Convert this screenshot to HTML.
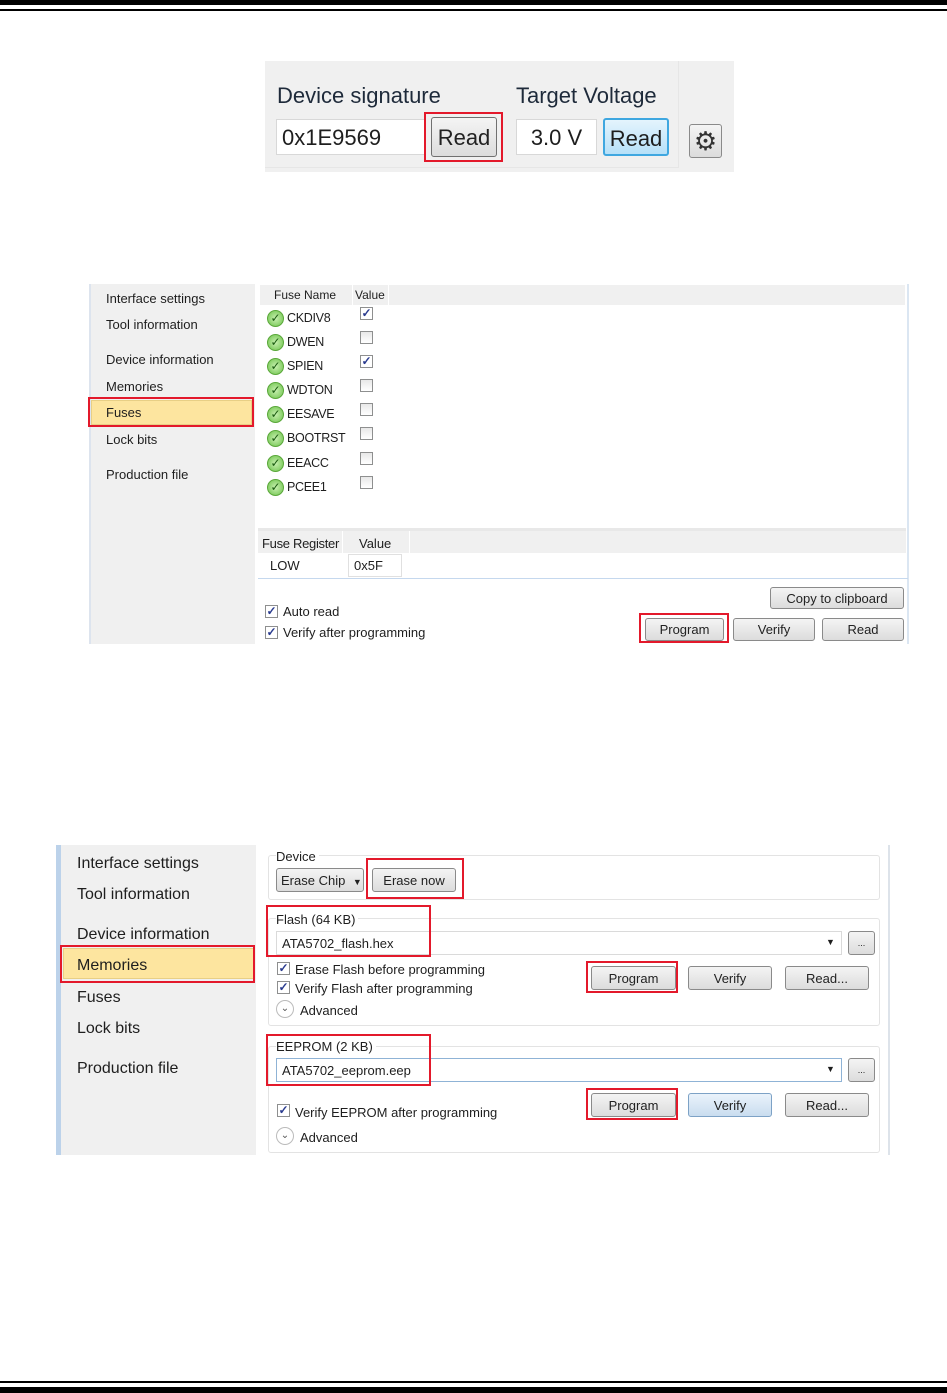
<!DOCTYPE html>
<html><head><style>
*{margin:0;padding:0;box-sizing:border-box}
body{width:947px;height:1393px;background:#fff;position:relative;overflow:hidden;font-family:"Liberation Sans",sans-serif;color:#1e1e1e}
div,span{position:absolute}
.t{white-space:nowrap}
.btn{border:1px solid #8a8a8a;border-radius:3px;background:linear-gradient(#f4f4f4,#dcdcdc);text-align:center;color:#222}
.red{border:2px solid #e3192b}
.cb{width:13px;height:13px;border:1px solid #8e8f8f;background:linear-gradient(#e8e8e8,#fff)}
.cbk{width:13px;height:13px;border:1px solid #8e8f8f;background:#fff;color:#2a3b8f;font-size:12px;line-height:11px;text-align:center;font-weight:bold}
.ok{width:17px;height:17px;border-radius:50%;background:radial-gradient(#c8f0b0,#6cc24a);border:1px solid #5aa83a;color:#1a5a10;font-size:12px;line-height:15px;text-align:center}
.grp{border:1px solid #e3e3e3;border-radius:3px}
.fn{font-size:12.5px;letter-spacing:-0.3px}
</style></head><body>
<div style="left:0;top:0;width:947px;height:5px;background:#000"></div>
<div style="left:0;top:9px;width:947px;height:2px;background:#000"></div>
<div style="left:0;top:1381px;width:947px;height:2px;background:#000"></div>
<div style="left:0;top:1387px;width:947px;height:6px;background:#000"></div>

<!-- Section 1 -->
<div style="left:265px;top:61px;width:469px;height:111px;background:#f0f0f0"></div>
<div style="left:678px;top:61px;width:1px;height:107px;background:#e6e6e6"></div>
<div style="left:265px;top:167px;width:413px;height:1px;background:#e6e6e6"></div>
<div class="t" style="left:277px;top:83px;font-size:22px;color:#1e2a3a">Device signature</div>
<div class="t" style="left:516px;top:83px;font-size:22px;color:#1e2a3a">Target Voltage</div>
<div class="t" style="left:276px;top:119px;width:150px;height:36px;background:#fff;border:1px solid #d8d8d8;font-size:22px;line-height:36px;padding-left:5px">0x1E9569</div>
<div class="btn t" style="left:431px;top:117px;width:66px;height:40px;font-size:22px;line-height:40px;border-color:#707070">Read</div>
<div class="red" style="left:424px;top:112px;width:79px;height:50px"></div>
<div class="t" style="left:516px;top:119px;width:81px;height:36px;background:#fff;border:1px solid #d8d8d8;font-size:22px;line-height:36px;text-align:center">3.0 V</div>
<div class="t" style="left:603px;top:118px;width:66px;height:38px;font-size:22px;line-height:37px;text-align:center;border:2px solid #3fa7e0;border-radius:3px;background:linear-gradient(#e4f4fd,#b6e0f8)">Read</div>
<div class="btn" style="left:689px;top:124px;width:33px;height:34px;font-size:26px;line-height:32px;color:#333">⚙</div>

<!-- Section 2 -->
<div style="left:89px;top:284px;width:166px;height:360px;background:#f0f0f0"></div>
<div style="left:89px;top:284px;width:2px;height:360px;background:#dde4ee"></div>
<div style="left:255px;top:284px;width:655px;height:360px;background:#fff"></div>
<div style="left:907px;top:284px;width:2px;height:360px;background:#dbe6f2"></div>
<div class="t" style="left:106px;top:291px;font-size:13px">Interface settings</div>
<div class="t" style="left:106px;top:317px;font-size:13px">Tool information</div>
<div class="t" style="left:106px;top:352px;font-size:13px">Device information</div>
<div class="t" style="left:106px;top:379px;font-size:13px">Memories</div>
<div style="left:91px;top:400px;width:161px;height:25px;background:#fde59f;border:1px solid #e8cf85"></div>
<div class="t" style="left:106px;top:405px;font-size:13px">Fuses</div>
<div class="red" style="left:88px;top:397px;width:166px;height:30px"></div>
<div class="t" style="left:106px;top:432px;font-size:13px">Lock bits</div>
<div class="t" style="left:106px;top:467px;font-size:13px">Production file</div>

<div style="left:260px;top:285px;width:645px;height:20px;background:#f0f0f0"></div>
<div style="left:352px;top:285px;width:1px;height:20px;background:#fff"></div>
<div style="left:388px;top:285px;width:1px;height:20px;background:#fff"></div>
<div class="t" style="left:274px;top:288px;font-size:12px">Fuse Name</div>
<div class="t" style="left:355px;top:288px;font-size:12px">Value</div>

<div class="ok" style="left:267px;top:310px">✓</div><div class="t fn" style="left:287px;top:311px">CKDIV8</div><div class="cbk" style="left:360px;top:307px">✓</div>
<div class="ok" style="left:267px;top:334px">✓</div><div class="t fn" style="left:287px;top:335px">DWEN</div><div class="cb" style="left:360px;top:331px"></div>
<div class="ok" style="left:267px;top:358px">✓</div><div class="t fn" style="left:287px;top:359px">SPIEN</div><div class="cbk" style="left:360px;top:355px">✓</div>
<div class="ok" style="left:267px;top:382px">✓</div><div class="t fn" style="left:287px;top:383px">WDTON</div><div class="cb" style="left:360px;top:379px"></div>
<div class="ok" style="left:267px;top:406px">✓</div><div class="t fn" style="left:287px;top:407px">EESAVE</div><div class="cb" style="left:360px;top:403px"></div>
<div class="ok" style="left:267px;top:430px">✓</div><div class="t fn" style="left:287px;top:431px">BOOTRST</div><div class="cb" style="left:360px;top:427px"></div>
<div class="ok" style="left:267px;top:455px">✓</div><div class="t fn" style="left:287px;top:456px">EEACC</div><div class="cb" style="left:360px;top:452px"></div>
<div class="ok" style="left:267px;top:479px">✓</div><div class="t fn" style="left:287px;top:480px">PCEE1</div><div class="cb" style="left:360px;top:476px"></div>

<div style="left:258px;top:528px;width:648px;height:3px;background:#e8e8e8"></div>
<div style="left:258px;top:531px;width:648px;height:22px;background:#f0f0f0"></div>
<div style="left:342px;top:531px;width:1px;height:22px;background:#fff"></div>
<div style="left:409px;top:531px;width:1px;height:22px;background:#fff"></div>
<div class="t" style="left:262px;top:536px;font-size:13px;letter-spacing:-0.3px">Fuse Register</div>
<div class="t" style="left:359px;top:536px;font-size:13px">Value</div>
<div class="t" style="left:270px;top:558px;font-size:13px">LOW</div>
<div class="t" style="left:348px;top:554px;width:54px;height:23px;border:1px solid #e0e0e0;font-size:13px;line-height:22px;padding-left:5px">0x5F</div>
<div style="left:258px;top:578px;width:650px;height:1px;background:#c5d8ee"></div>

<div class="cbk" style="left:265px;top:605px">✓</div><div class="t" style="left:283px;top:604px;font-size:13px">Auto read</div>
<div class="cbk" style="left:265px;top:626px">✓</div><div class="t" style="left:283px;top:625px;font-size:13px">Verify after programming</div>
<div class="btn t" style="left:770px;top:587px;width:134px;height:22px;font-size:13px;line-height:21px">Copy to clipboard</div>
<div class="btn t" style="left:645px;top:618px;width:79px;height:23px;font-size:13px;line-height:22px">Program</div>
<div class="red" style="left:639px;top:613px;width:90px;height:30px"></div>
<div class="btn t" style="left:733px;top:618px;width:82px;height:23px;font-size:13px;line-height:22px">Verify</div>
<div class="btn t" style="left:822px;top:618px;width:82px;height:23px;font-size:13px;line-height:22px">Read</div>

<!-- Section 3 -->
<div style="left:56px;top:845px;width:200px;height:310px;background:#f0f0f0"></div>
<div style="left:56px;top:845px;width:5px;height:310px;background:#bcd2ea"></div>
<div style="left:262px;top:845px;width:628px;height:310px;background:#fff"></div>
<div style="left:888px;top:845px;width:2px;height:310px;background:#dde3ea"></div>
<div class="t" style="left:77px;top:855px;font-size:16px">Interface settings</div>
<div class="t" style="left:77px;top:886px;font-size:16px">Tool information</div>
<div class="t" style="left:77px;top:926px;font-size:16px">Device information</div>
<div style="left:63px;top:948px;width:191px;height:31px;background:#fde59f;border:1px solid #e8cf85"></div>
<div class="t" style="left:77px;top:957px;font-size:16px">Memories</div>
<div class="red" style="left:60px;top:945px;width:195px;height:38px"></div>
<div class="t" style="left:77px;top:989px;font-size:16px">Fuses</div>
<div class="t" style="left:77px;top:1020px;font-size:16px">Lock bits</div>
<div class="t" style="left:77px;top:1060px;font-size:16px">Production file</div>

<div class="grp" style="left:268px;top:855px;width:612px;height:45px"></div>
<div class="t" style="left:276px;top:849px;font-size:13px;background:#fff;padding-right:3px">Device</div>
<div class="btn t" style="left:276px;top:868px;width:88px;height:24px;font-size:13px;line-height:23px;text-align:left;padding-left:4px">Erase Chip <span style="position:static;font-size:9px;margin-left:4px">▼</span></div>
<div class="btn t" style="left:372px;top:868px;width:84px;height:24px;font-size:13px;line-height:23px">Erase now</div>
<div class="red" style="left:366px;top:858px;width:98px;height:41px"></div>

<div class="grp" style="left:268px;top:918px;width:612px;height:108px"></div>
<div class="t" style="left:276px;top:912px;font-size:13px;background:#fff;padding-right:3px">Flash (64 KB)</div>
<div class="t" style="left:276px;top:931px;width:566px;height:24px;border:1px solid #dadada;font-size:13px;line-height:23px;padding-left:5px">ATA5702_flash.hex</div>
<div class="t" style="left:826px;top:937px;font-size:9px">▼</div>
<div class="btn t" style="left:848px;top:931px;width:27px;height:24px;font-size:9px;line-height:22px">...</div>
<div class="red" style="left:266px;top:905px;width:165px;height:52px"></div>
<div class="cbk" style="left:277px;top:962px">✓</div><div class="t" style="left:295px;top:962px;font-size:13px">Erase Flash before programming</div>
<div class="cbk" style="left:277px;top:981px">✓</div><div class="t" style="left:295px;top:981px;font-size:13px">Verify Flash after programming</div>
<div style="left:276px;top:1000px;width:18px;height:18px;border:1px solid #bbb;border-radius:50%;font-size:10px;line-height:16px;text-align:center;color:#555">⌄</div>
<div class="t" style="left:300px;top:1003px;font-size:13px">Advanced</div>
<div class="btn t" style="left:591px;top:966px;width:85px;height:24px;font-size:13px;line-height:23px">Program</div>
<div class="red" style="left:586px;top:961px;width:92px;height:32px"></div>
<div class="btn t" style="left:688px;top:966px;width:84px;height:24px;font-size:13px;line-height:23px">Verify</div>
<div class="btn t" style="left:785px;top:966px;width:84px;height:24px;font-size:13px;line-height:23px">Read...</div>

<div class="grp" style="left:268px;top:1046px;width:612px;height:107px"></div>
<div class="t" style="left:276px;top:1039px;font-size:13px;background:#fff;padding-right:3px">EEPROM (2 KB)</div>
<div class="t" style="left:276px;top:1058px;width:566px;height:24px;border:1px solid #8fb3d6;font-size:13px;line-height:23px;padding-left:5px">ATA5702_eeprom.eep</div>
<div class="t" style="left:826px;top:1064px;font-size:9px">▼</div>
<div class="btn t" style="left:848px;top:1058px;width:27px;height:24px;font-size:9px;line-height:22px">...</div>
<div class="red" style="left:266px;top:1034px;width:165px;height:52px"></div>
<div class="cbk" style="left:277px;top:1104px">✓</div><div class="t" style="left:295px;top:1105px;font-size:13px">Verify EEPROM after programming</div>
<div style="left:276px;top:1127px;width:18px;height:18px;border:1px solid #bbb;border-radius:50%;font-size:10px;line-height:16px;text-align:center;color:#555">⌄</div>
<div class="t" style="left:300px;top:1130px;font-size:13px">Advanced</div>
<div class="btn t" style="left:591px;top:1093px;width:85px;height:24px;font-size:13px;line-height:23px">Program</div>
<div class="red" style="left:586px;top:1088px;width:92px;height:32px"></div>
<div class="t" style="left:688px;top:1093px;width:84px;height:24px;font-size:13px;line-height:23px;text-align:center;border:1px solid #7da2c6;border-radius:3px;background:linear-gradient(#eaf3fb,#c9ddef)">Verify</div>
<div class="btn t" style="left:785px;top:1093px;width:84px;height:24px;font-size:13px;line-height:23px">Read...</div>
</body></html>
